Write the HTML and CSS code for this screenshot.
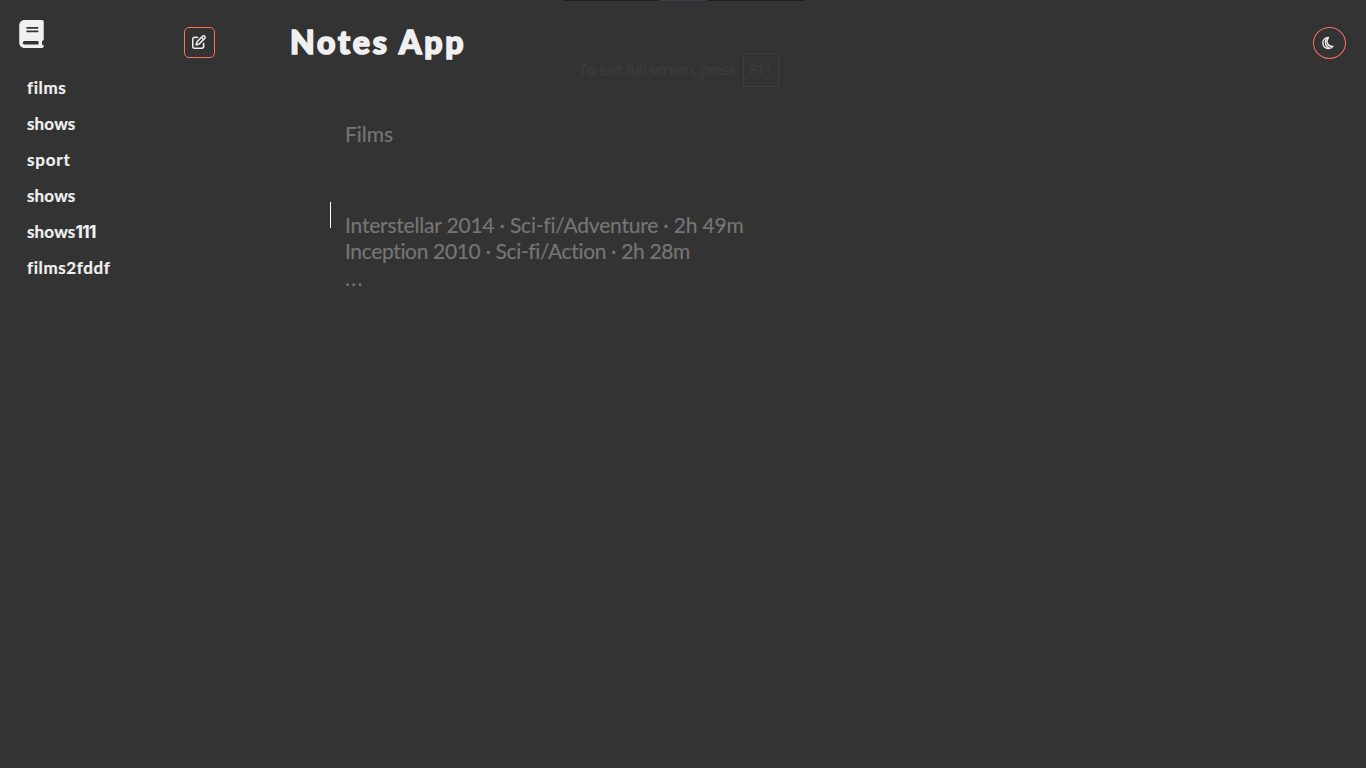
FILE: index.html
```html
<!DOCTYPE html>
<html lang="en">
<head>
<meta charset="utf-8">
<title>Notes App</title>
<link rel="stylesheet" href="styles.css">
</head>
<body>
<div class="app">
  <aside class="sidebar">
    <div class="sidebar-head">
      <svg class="book" viewBox="0 0 448 512"><path d="M96 0C43 0 0 43 0 96V416c0 53 43 96 96 96H384h32c17.7 0 32-14.3 32-32s-14.3-32-32-32V384c17.7 0 32-14.3 32-32V32c0-17.7-14.3-32-32-32H384 96zm0 384H352v64H96c-17.7 0-32-14.3-32-32s14.3-32 32-32zm32-240c0-8.8 7.2-16 16-16H336c8.8 0 16 7.2 16 16s-7.2 16-16 16H144c-8.8 0-16-7.2-16-16zm16 48H336c8.8 0 16 7.2 16 16s-7.2 16-16 16H144c-8.8 0-16-7.2-16-16s7.2-16 16-16z"/></svg>
      <button class="edit-btn" aria-label="New note"><svg viewBox="0 0 512 512"><path d="M441 58.9L453.1 71c9.4 9.4 9.4 24.6 0 33.9L424 134.1 377.9 88 407 58.9c9.4-9.4 24.6-9.4 33.9 0zM209.8 256.2L344 121.9 390.1 168 255.8 302.2c-2.9 2.9-6.5 5-10.4 6.1l-58.5 16.7 16.7-58.5c1.1-3.9 3.2-7.5 6.1-10.4zM373.1 25L175.8 222.2c-8.7 8.7-15 19.4-18.3 31.1l-28.6 100c-2.4 8.4-.1 17.4 6.1 23.6s15.2 8.5 23.6 6.1l100-28.6c11.8-3.4 22.5-9.7 31.1-18.3L487 138.9c28.1-28.1 28.1-73.7 0-101.8L474.9 25C446.8-3.1 401.2-3.1 373.1 25zM88 64C39.4 64 0 103.4 0 152V424c0 48.6 39.4 88 88 88H360c48.6 0 88-39.4 88-88V312c0-13.3-10.7-24-24-24s-24 10.7-24 24V424c0 22.1-17.9 40-40 40H88c-22.1 0-40-17.9-40-40V152c0-22.1 17.9-40 40-40H200c13.3 0 24-10.7 24-24s-10.7-24-24-24H88z"/></svg></button>
    </div>
    <nav class="notes">
      <a class="n1">films</a>
      <a class="n2">shows</a>
      <a class="n3">sport</a>
      <a class="n2">shows</a>
      <a class="n2">shows<span class="ones">111</span></a>
      <a class="n1">films2fddf</a>
    </nav>
  </aside>
  <main class="main">
    <header class="topbar">
      <h1 class="title">Notes App</h1>
      <button class="theme-btn" aria-label="Dark mode"><svg viewBox="0 0 12 14"><path d="M6.4 1.5C2.8 1.7.8 4.2.8 7c0 3.200 2.500 5.600 5.600 5.600 1.900 0 3.500-.8 4.500-2.200C5.800 10.900 3.200 5.600 6.400 1.500Z"/><path d="M4.300 2.800C2.200 6.300 3.700 10.700 7.200 12"/></svg></button>
    </header>
    <p class="note-title">Films</p>
    <div class="editor">
      <span class="caret"></span>
      <div class="note-body">
        <div class="b1">Interstellar 2014 · Sci-fi/Adventure · 2h 49m</div>
        <div class="b2">Inception 2010 · Sci-fi/Action · 2h 28m</div>
        <div class="b3">...</div>
      </div>
    </div>
  </main>
</div>
<div class="screen-edge"><i></i></div>
<div class="fullscreen-tip"><span>To exit full screen, press</span><kbd>F11</kbd></div>
</body>
</html>
```
FILE: styles.css
```css
* { box-sizing: border-box; }
body { margin: 0; background: #333; color: #f0f0f0; font-family: Lato, sans-serif; overflow: hidden; }
.app { display: flex; height: 768px; }
.sidebar { width: 230px; }
.sidebar-head { display: flex; justify-content: space-between; align-items: flex-start; height: 70px; padding: 20px 15px 0 19px; }
.book { width: 25px; height: 28px; fill: #f0f0f0; }
button { display: flex; align-items: center; justify-content: center; padding: 0; background: none; border: 1px solid #ff7063; }
.edit-btn { width: 31px; height: 31px; margin-top: 7px; border-radius: 5px; }
.edit-btn svg { width: 14px; height: 14px; fill: #f0f0f0; stroke: #f0f0f0; stroke-width: 12; margin-top: -2px; margin-left: -1px; }
.notes { display: flex; flex-direction: column; padding-left: 27px; }
.notes a { height: 36px; line-height: 35px; font-size: 17px; font-weight: 700; white-space: nowrap; -webkit-text-stroke: .2px #f0f0f0; }
.n1 { letter-spacing: .6px; }
.n2 { letter-spacing: .15px; }
.n3 { letter-spacing: .8px; }
.ones { font-family: Inter, sans-serif; letter-spacing: -.5px; }
.main { flex: 1; padding-left: 60px; }
.topbar { display: flex; justify-content: space-between; height: 121px; padding: 21px 20px 0 0; }
.title { margin: 0; font-size: 32px; line-height: 42px; font-weight: 900; letter-spacing: 2.8px; white-space: nowrap; -webkit-text-stroke: 1.6px #f0f0f0; }
.theme-btn { width: 33px; height: 32px; margin-top: 6px; border-radius: 50%; }
.theme-btn svg { width: 12px; height: 14px; margin-left: -3px; fill: none; stroke: #f0f0f0; stroke-width: 1.4; stroke-linejoin: round; }
.note-title { margin: 0 0 55px 55px; font-size: 21px; line-height: 26px; color: #757575; }
.note-title, .note-body { -webkit-text-stroke: .2px #757575; }
.editor { display: flex; align-items: flex-start; padding-left: 40px; }
.caret { width: 1px; height: 26px; background: #fff; }
.note-body { padding: 10px 0 0 14px; font-size: 21px; line-height: 26px; color: #757575; white-space: nowrap; }
.b1 { letter-spacing: -.2px; }
.b2 { letter-spacing: -.35px; }
.b3 { letter-spacing: 1.3px; padding-top: 1px; }
.screen-edge { position: absolute; top: 0; left: 563px; width: 241px; height: 1px; padding-left: 96px; background: #202020; }
.screen-edge i { display: block; width: 48px; height: 1px; background: #3a414b; }
.fullscreen-tip { position: absolute; left: 579px; top: 53px; width: 200px; height: 34px; display: flex; align-items: center; justify-content: space-between; color: #3e3e3e; font: 15px "Open Sans", sans-serif; white-space: nowrap; letter-spacing: -.45px; }
.fullscreen-tip span { margin-top: -2px; }
.fullscreen-tip kbd { width: 36px; height: 34px; border: 1px solid #3e3e3e; border-radius: 2px; font: inherit; letter-spacing: 0; line-height: 31px; text-align: center; }
```
